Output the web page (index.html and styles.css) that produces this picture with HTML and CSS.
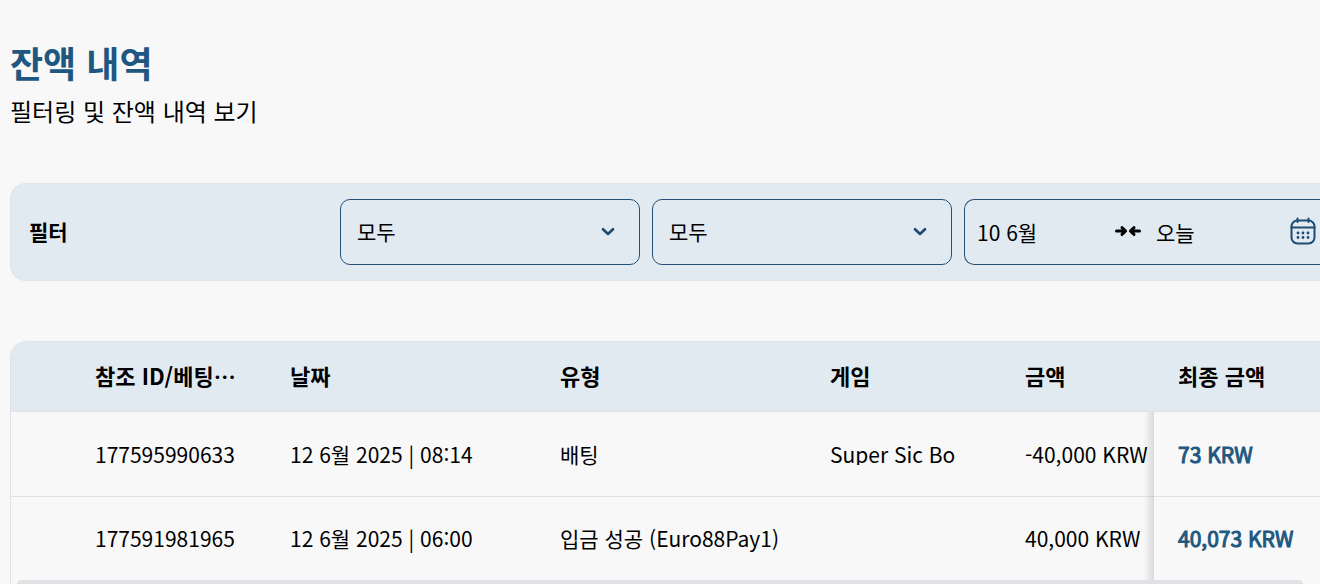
FILE: index.html
```html
<!DOCTYPE html>
<html lang="ko">
<head>
    <meta charset="UTF-8">
    <meta name="viewport" content="width=device-width, initial-scale=1.0">
    <title>잔액 내역</title>
    <link rel="stylesheet" href="styles.css">
</head>
<body>

    <main class="page">
        <header class="page-header">
            <h1>잔액 내역</h1>
            <p>필터링 및 잔액 내역 보기</p>
        </header>

        <!-- Filters -->
        <form class="filter">
            <h2 class="filter-title">필터</h2>
            <div class="select-box">
                <select aria-label="유형">
                    <option>모두</option>
                </select>
                <svg class="chevron" viewBox="0 0 14 10" aria-hidden="true"><path d="M2 2.2 L7 7 L12 2.2"/></svg>
            </div>
            <div class="select-box">
                <select aria-label="게임">
                    <option>모두</option>
                </select>
                <svg class="chevron" viewBox="0 0 14 10" aria-hidden="true"><path d="M2 2.2 L7 7 L12 2.2"/></svg>
            </div>
            <div class="date-range">
                <input class="date" type="text" value="10 6월" aria-label="시작일">
                <svg class="arrows" viewBox="0 0 26 12" aria-hidden="true">
                    <path d="M1.5 6 H10 M7 2.6 L10.6 6 L7 9.4"/>
                    <path d="M24.5 6 H16 M19 2.6 L15.4 6 L19 9.4"/>
                </svg>
                <input class="date" type="text" value="오늘" aria-label="종료일">
                <button class="calendar" type="button" aria-label="달력">
                    <svg viewBox="0 0 26 28" aria-hidden="true">
                        <rect x="1.5" y="3.5" width="23" height="23" rx="6"/>
                        <path d="M1.5 10.5 H24.5 M7.5 1.5 V5 M18.5 1.5 V5"/>
                        <path class="dots" d="M8 16 H8.01 M13 16 H13.01 M18 16 H18.01 M8 20.5 H8.01 M13 20.5 H13.01 M18 20.5 H18.01"/>
                    </svg>
                </button>
            </div>
        </form>

        <!-- Balance table -->
        <div class="table-box">
            <table>
                <colgroup>
                    <col class="col-icon">
                    <col class="col-small">
                    <col class="col-large">
                    <col class="col-large">
                    <col class="col-small">
                    <col class="col-amount">
                    <col>
                </colgroup>
                <thead>
                    <tr>
                        <th></th>
                        <th>참조 ID/베팅…</th>
                        <th>날짜</th>
                        <th>유형</th>
                        <th>게임</th>
                        <th>금액</th>
                        <th>최종 금액</th>
                    </tr>
                </thead>
                <tbody>
                    <tr>
                        <td></td>
                        <td>177595990633</td>
                        <td>12 6월 2025 | 08:14</td>
                        <td>배팅</td>
                        <td><span class="game">Super Sic Bo</span></td>
                        <td>-40,000 KRW</td>
                        <td class="final">73 KRW</td>
                    </tr>
                    <tr>
                        <td></td>
                        <td>177591981965</td>
                        <td>12 6월 2025 | 06:00</td>
                        <td>입금 성공 (Euro88Pay1)</td>
                        <td></td>
                        <td>40,000 KRW</td>
                        <td class="final">40,073 KRW</td>
                    </tr>
                </tbody>
            </table>
            <div class="scrollbar"></div>
        </div>
    </main>

</body>
</html>
```

FILE: styles.css
```css
* {
    margin: 0;
    padding: 0;
    box-sizing: border-box;
}

body {
    background: #f8f8f8;
    color: #000;
    font-family: "Noto Sans CJK KR", sans-serif;
    font-size: 21px;
    line-height: 32px;
    overflow: hidden;
}

select,
input,
button {
    font: inherit;
    color: inherit;
    background: none;
    border: none;
    outline: none;
}

.page {
    padding: 36px 0 0 10px;
}

.page-header {
    margin-bottom: 54px;
}

h1 {
    margin-bottom: 5px;
    color: #205781;
    font-size: 36px;
    line-height: 52px;
}

.page-header p {
    font-size: 24px;
    line-height: 36px;
}

/* Filters */

.filter {
    display: flex;
    align-items: center;
    gap: 12px;
    padding: 15px 0 15px 18px;
    background: #e2eaf1;
    border: 1px solid #dfe4ea;
    border-right: none;
    border-radius: 16px 0 0 16px;
}

.filter-title {
    flex: 0 0 299px;
    padding-bottom: 2px;
    font-size: 21px;
}

.select-box {
    position: relative;
    flex: 0 0 300px;
    height: 66px;
}

.select-box select {
    width: 100%;
    height: 100%;
    padding: 0 16px 2px;
    border: 1px solid #245078;
    border-radius: 10px;
    appearance: none;
}

.chevron {
    position: absolute;
    top: 28px;
    right: 25px;
    width: 14px;
    height: 10px;
    fill: none;
    stroke: #1d4b73;
    stroke-width: 2.6;
    stroke-linecap: round;
    stroke-linejoin: round;
    pointer-events: none;
}

.date-range {
    display: flex;
    align-items: center;
    flex: 1;
    min-width: 0;
    height: 66px;
    padding: 0 4px 0 12px;
    border: 1px solid #245078;
    border-right: none;
    border-radius: 10px 0 0 10px;
}

.date {
    flex: 1;
    min-width: 0;
}

.arrows {
    flex: none;
    width: 26px;
    height: 12px;
    margin: 0 15px 3px 4px;
    fill: none;
    stroke: #000;
    stroke-width: 3;
    stroke-linecap: round;
    stroke-linejoin: round;
}

.calendar {
    display: flex;
    padding-bottom: 2px;
}

.calendar svg {
    width: 26px;
    height: 28px;
    fill: none;
    stroke: #1d4b73;
    stroke-width: 2;
    stroke-linecap: round;
}

.calendar .dots {
    stroke-width: 2.8;
}

/* Table */

.table-box {
    margin-top: 60px;
    border: 1px solid #dfe1e6;
    border-right: none;
    border-bottom: none;
    border-radius: 16px 0 0 0;
    overflow: hidden;
}

table {
    width: 100%;
    table-layout: fixed;
    border-collapse: separate;
    border-spacing: 0;
}

.col-icon {
    width: 60px;
}

.col-small {
    width: 195px;
}

.col-large {
    width: 270px;
}

.col-amount {
    width: 153px;
}

th,
td {
    padding-left: 24px;
    text-align: left;
    white-space: nowrap;
    border-bottom: 1px solid #dfe1e6;
}

th {
    height: 70px;
    padding-bottom: 3px;
    background: #e2eaf1;
    font-size: 22px;
}

td {
    height: 85px;
}

tbody tr:last-child td {
    height: 83px;
    border-bottom-color: transparent;
}

.game {
    display: block;
    line-height: 22px;
    overflow: hidden;
}

.final {
    position: relative;
    color: #205781;
    -webkit-text-stroke: 1px #205781;
}

/* shadow over the amount column */
.final::before {
    content: "";
    position: absolute;
    top: 0;
    bottom: -1px;
    left: -10px;
    width: 10px;
    background: linear-gradient(to left, rgba(0, 0, 0, 0.12), rgba(0, 0, 0, 0));
}

.scrollbar {
    height: 8px;
    margin: 0 17px 0 6px;
    background: #e0e2e6;
    border-radius: 4px;
}
```
